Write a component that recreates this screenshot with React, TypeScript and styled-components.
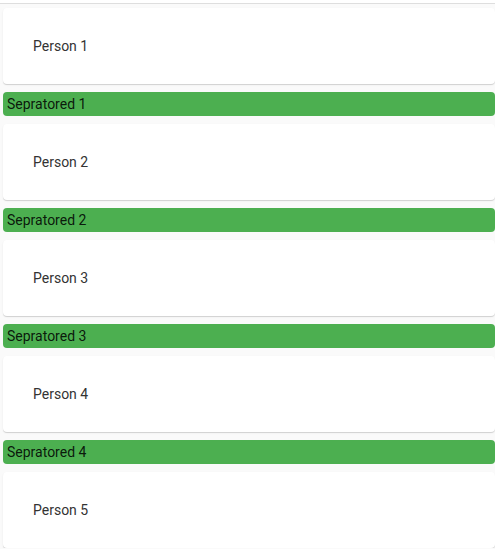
import React from "react";
import styled, { createGlobalStyle } from "styled-components";

const Global = createGlobalStyle`
  html, body { margin: 0; padding: 0; background: #fafafa; }
  body { font-family: Roboto, "Noto Sans", sans-serif; }
`;

const Page = styled.div`
  display: flex;
  flex-direction: column;
  gap: 8px;
  padding: 0 0 0 3px;
  width: 492px;
`;

const TopEdge = styled.div`
  height: 3px;
  margin-left: -3px;
  width: 495px;
  border-bottom: 1px solid #dedede;
  background: #fff;
  margin-bottom: -4px;
`;

const Card = styled.div`
  height: 76px;
  box-sizing: border-box;
  background: #fff;
  border-radius: 4px;
  box-shadow: 0 1px 0 0 rgba(0, 0, 0, 0.1), 0 1px 2px 0 rgba(0, 0, 0, 0.08);
  display: flex;
  align-items: center;
  padding-left: 30px;
  font-size: 14px;
  color: #333;
`;

const Separator = styled.div`
  height: 24px;
  box-sizing: border-box;
  background: #4caf50;
  border-radius: 4px;
  display: flex;
  align-items: center;
  padding-left: 4px;
  font-size: 14px;
  color: rgba(0, 0, 0, 0.87);
`;

const people = [1, 2, 3, 4, 5];

export default function App() {
  return (
    <>
      <Global />
      <Page>
        <TopEdge />
        {people.map((n) => (
          <React.Fragment key={n}>
            <Card>Person {n}</Card>
            {n < 5 && <Separator>Sepratored {n}</Separator>}
          </React.Fragment>
        ))}
      </Page>
    </>
  );
}
